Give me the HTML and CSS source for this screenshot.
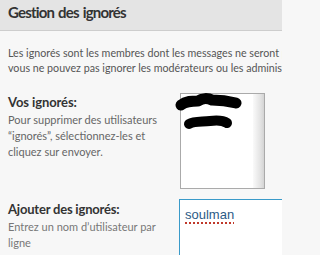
FILE: index.html
```html
<!DOCTYPE html>
<html lang="fr">
<head>
<meta charset="utf-8">
<title>Gestion des ignorés</title>
<link rel="stylesheet" href="styles.css">
</head>
<body>
<div class="page">
  <h2 class="panel-title">Gestion des ignorés</h2>
  <div class="panel-body">
    <p class="intro"><span class="intro-line">Les ignorés sont les membres dont les messages ne seront pas affichés. Notez que</span><span class="intro-line">vous ne pouvez pas ignorer les modérateurs ou les administrateurs.</span></p>
    <div class="row row-list">
      <div class="label">
        <div class="label-title">Vos ignorés:</div>
        <div class="label-desc">Pour supprimer des utilisateurs “ignorés”, sélectionnez-les et cliquez sur envoyer.</div>
      </div>
      <div class="field">
        <div class="listbox">
          <div class="list-items"></div>
          <div class="scrollbar"></div>
        </div>
        <svg class="redact" width="90" height="45" viewBox="0 0 90 45" aria-hidden="true">
          <path d="M7 13 C 12 9, 18 9, 24 9 C 28 6, 34 6, 38 8 C 46 8, 54 9, 62 11" fill="none" stroke="#000" stroke-width="11" stroke-linecap="round" stroke-linejoin="round"/>
          <path d="M15 32 C 20 29, 28 30, 36 29 C 44 28, 50 29, 53 31" fill="none" stroke="#000" stroke-width="10" stroke-linecap="round" stroke-linejoin="round"/>
        </svg>
      </div>
    </div>
    <div class="row row-add">
      <div class="label">
        <div class="label-title">Ajouter des ignorés:</div>
        <div class="label-desc">Entrez un nom d’utilisateur par ligne</div>
      </div>
      <div class="field">
        <div class="textarea"><span class="typed">soulman</span></div>
      </div>
    </div>
  </div>
</div>
</body>
</html>
```
FILE: styles.css
```css
html, body {
  margin: 0;
  padding: 0;
  overflow: hidden;
  background: #f7f7f7;
}
body {
  font-family: Lato, "Noto Sans", sans-serif;
  color: #555;
}
.page {
  width: 282px;
  height: 255px;
  overflow: hidden;
  background: #f7f7f7;
}
.panel-title {
  margin: 0;
  height: 31px;
  box-sizing: border-box;
  padding: 2px 8px 0;
  background: #e4e4e4;
  border-bottom: 1px solid #cdcdcd;
  font-size: 15px;
  font-weight: 700;
  letter-spacing: -0.8px;
  word-spacing: 1px;
  line-height: 20px;
  color: #333;
  white-space: nowrap;
}
.panel-body {
  padding: 14px 0 0 8px;
}
.intro {
  margin: 0;
  font-size: 10.7px;
  line-height: 15px;
  color: #555;
  white-space: nowrap;
}
.intro-line {
  display: block;
}
.row {
  display: flex;
}
.row-list {
  margin-top: 17px;
  height: 96px;
}
.row-add {
  margin-top: 11px;
}
.label {
  width: 172px;
  flex: none;
}
.label-title {
  font-size: 13px;
  font-weight: 700;
  letter-spacing: -0.1px;
  color: #333;
  line-height: 20px;
}
.label-desc {
  font-size: 11px;
  line-height: 16px;
  color: #666;
  width: 150px;
}
.row-add .label-title {
  letter-spacing: -0.2px;
}
.row-add .label-desc {
  color: #777;
  width: 148px;
}
.field {
  position: relative;
  flex: none;
  padding-top: 1px;
}
.listbox {
  width: 85px;
  height: 96px;
  box-sizing: border-box;
  border: 1px solid #aaa;
  background: #fff;
  display: flex;
}
.list-items {
  flex: 1;
}
.scrollbar {
  width: 11px;
  background: linear-gradient(to right, #fafafa, #e2e2e2 70%, #d4d4d4);
}
.redact {
  position: absolute;
  left: -6px;
  top: 0;
}
.row-add .field {
  padding-top: 0;
}
.textarea {
  width: 110px;
  height: 70px;
  box-sizing: border-box;
  border: 1px solid #3a9ac9;
  background: #fff;
  padding: 3px 5px;
  margin-left: -1px;
}
.typed {
  font-family: "Liberation Sans", Arial, sans-serif;
  font-size: 13px;
  color: #2c5b86;
  text-decoration: underline dotted #c0392b;
  text-decoration-thickness: 2px;
  text-underline-offset: 3px;
}
```
